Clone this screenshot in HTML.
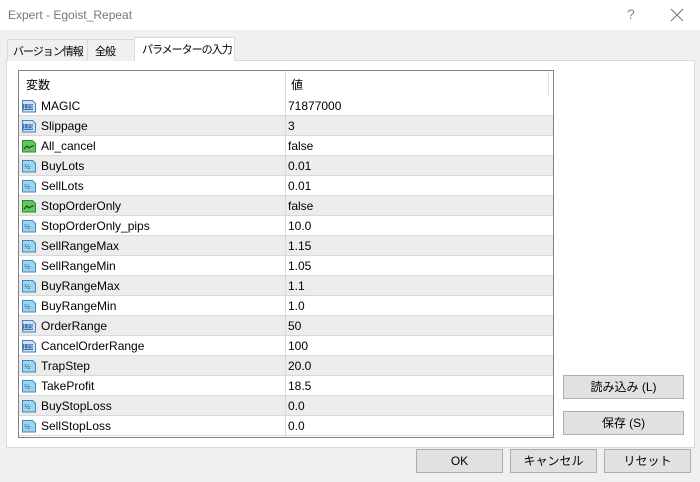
<!DOCTYPE html>
<html><head><meta charset="utf-8"><style>
*{margin:0;padding:0;box-sizing:border-box}
body{width:700px;height:482px;background:#f0f0f0;font-family:"Liberation Sans","Noto Sans CJK JP",sans-serif;font-size:12px;color:#000;position:relative;overflow:hidden}
.abs{position:absolute}
.title{left:0;top:0;width:700px;height:30px;background:#fff}
.tab{top:39px;height:22px;border:1px solid #d9d9d9;border-bottom:none;background:#f0f0f0;padding:3px 3px;font-size:11px;white-space:nowrap;letter-spacing:-1px;overflow:hidden}
.panel{left:6px;top:60px;width:689px;height:388px;border:1px solid #d9d9d9;background:#fff}
.tbl{left:18px;top:70px;width:536px;height:368px;border:1px solid #828282;background:#fff;overflow:hidden}
.row{position:absolute;left:0;width:534px;height:20px;border-bottom:1px solid #d8d8d8}
.row.g{background:#ececec}
.row .n{position:absolute;left:22px;top:3px}
.row .v{position:absolute;left:269px;top:3px}
.row .d{position:absolute;left:266px;top:0;width:1px;height:20px;background:#d8d8d8}
.row svg{position:absolute;left:2px;top:2px}
.btn{height:24px;border:1px solid #adadad;background:#e1e1e1;text-align:center;line-height:22px;font-size:12px;white-space:nowrap}
</style></head><body>
<div class="abs title"></div>
<div class="abs" style="left:8px;top:8px;color:#777;font-size:12px">Expert - Egoist_Repeat</div>
<div class="abs" style="left:627px;top:6px;color:#888;font-size:14px">?</div>
<svg class="abs" style="left:670px;top:8px" width="14" height="14"><path d="M1 1L13 13M13 1L1 13" stroke="#777" stroke-width="1"/></svg>
<div class="abs panel"></div>
<div class="abs tab" style="left:7px;width:81px;padding-left:5px">バージョン情報</div>
<div class="abs tab" style="left:87px;width:48px;padding-left:7px">全般</div>
<div class="abs tab" style="left:134px;top:37px;height:24px;width:101px;background:#fff;border-color:#d9d9d9;padding-left:7px">パラメーターの入力</div>
<div class="abs tbl">
<div class="row" style="top:0;height:25px;border-bottom:none"><span class="abs" style="left:7px;top:5px">変数</span><span class="abs" style="left:272px;top:5px">値</span><div class="d" style="height:25px"></div><div class="abs" style="left:529px;top:0;width:1px;height:25px;background:#e4e4e4"></div></div>
<div id="rows"></div>
</div>
<div class="abs btn" style="left:563px;top:375px;width:121px">読み込み (L)</div>
<div class="abs btn" style="left:563px;top:411px;width:121px">保存 (S)</div>
<div class="abs btn" style="left:416px;top:449px;width:87px">OK</div>
<div class="abs btn" style="left:510px;top:449px;width:87px">キャンセル</div>
<div class="abs btn" style="left:604px;top:449px;width:87px">リセット</div>
<script>
var I={
i:'<svg width="16" height="16"><path d="M1.5 2.5h10l3 3v8.5h-13z" fill="#cfe3f7" stroke="#4a7fb8"/><rect x="2" y="6" width="10" height="6" fill="#3b6fb0"/><text x="7" y="11" font-size="6" fill="#fff" text-anchor="middle" font-family="Liberation Sans">123</text></svg>',
b:'<svg width="16" height="16"><path d="M1.5 2.5h10l3 3v8.5h-13z" fill="#5fc85f" stroke="#2f8a2f"/><path d="M3 11l3-3 2 2 3-2h2" stroke="#0a3a0a" fill="none"/></svg>',
d:'<svg width="16" height="16"><path d="M1.5 2.5h10l3 3v8.5h-13z" fill="#9fd4ef" stroke="#3a8cc0"/><text x="6" y="11" font-size="7" fill="#1a4f80" text-anchor="middle" font-family="Liberation Sans">½</text></svg>'};
var R=[['i','MAGIC','71877000'],['i','Slippage','3'],['b','All_cancel','false'],['d','BuyLots','0.01'],['d','SellLots','0.01'],['b','StopOrderOnly','false'],['d','StopOrderOnly_pips','10.0'],['d','SellRangeMax','1.15'],['d','SellRangeMin','1.05'],['d','BuyRangeMax','1.1'],['d','BuyRangeMin','1.0'],['i','OrderRange','50'],['i','CancelOrderRange','100'],['d','TrapStep','20.0'],['d','TakeProfit','18.5'],['d','BuyStopLoss','0.0'],['d','SellStopLoss','0.0']];
var h='';R.forEach(function(r,k){h+='<div class="row'+(k%2?' g':'')+'" style="top:'+(25+k*20)+'px">'+I[r[0]]+'<span class="n">'+r[1]+'</span><div class="d"></div><span class="v">'+r[2]+'</span></div>';});
document.getElementById('rows').innerHTML=h;
</script>
</body></html>
